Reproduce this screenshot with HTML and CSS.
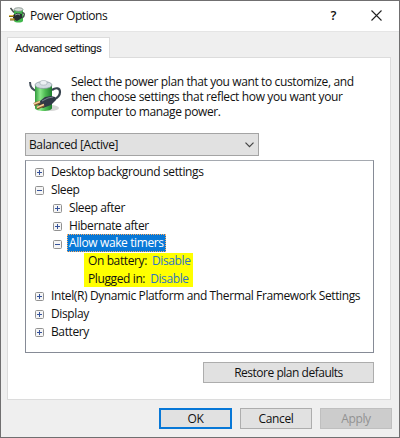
FILE: index.html
```
<!DOCTYPE html>
<html lang="en">
<head>
<meta charset="utf-8">
<title>Power Options</title>
<link rel="stylesheet" href="styles.css">
</head>
<body>
<svg width="0" height="0" class="defs">
  <defs>
    <linearGradient id="cell" x1="0" x2="1" y1="0" y2="0">
      <stop offset="0" stop-color="#2f9a3c"/><stop offset=".3" stop-color="#8be88a"/>
      <stop offset=".6" stop-color="#4dbb52"/><stop offset="1" stop-color="#1f7d2f"/>
    </linearGradient>
    <symbol id="battery" viewBox="0 0 34 34">
      <ellipse cx="23" cy="29" rx="8" ry="3" fill="#000" opacity=".16"/>
      <path d="M2 3C2 8 5 11 9 12" fill="none" stroke="#46515d" stroke-width="2"/>
      <path d="M7 6v23c0 4 17 4 17 0V6z" fill="url(#cell)"/>
      <ellipse cx="15.500" cy="6" rx="8.500" ry="3.500" fill="#d4dce2" stroke="#84949d" stroke-width=".7"/>
      <path d="M12 5V3c0-2 7-2 7 0v2c-1 1.500-6 1.500-7 0z" fill="#edf1f4" stroke="#9eaab2" stroke-width=".6"/>
      <path d="M24 11c4-3 8-2 8 2 0 3-2 6-7 8" fill="none" stroke="#38434f" stroke-width="2.200"/>
      <path d="M12 22l5-4 6-1 4 1 1 3-5 5-8 3-5-3z" fill="#303947"/>
      <path d="M14 22l6-3 5-1" fill="none" stroke="#77818e" stroke-width="1"/>
      <path d="M12 23l-6 2.500M16 26l-7 3" stroke="#805329" stroke-width="3"/>
      <path d="M12 22.500l-6 2.500M16 25.500l-7 3" stroke="#f4d29b" stroke-width="1.500"/>
    </symbol>
    <symbol id="battery-small" viewBox="0 0 16 17">
      <path d="M5 2v12c1 2 8 2 9 0V2z" fill="#42b84d"/>
      <ellipse cx="9.500" cy="2.500" rx="4.500" ry="1.800" fill="#d8dedb" stroke="#6f7f77" stroke-width=".7"/>
      <path d="M1.500 1L5 5.500M13 6c3-1 3 3 0 5" fill="none" stroke="#46504d" stroke-width="1.500"/>
      <path d="M4 8l4-2 5 1 0 4-5 3-4-2z" fill="#272e31"/>
      <path d="M0 9h5M1 12.500h5" stroke="#7d6318" stroke-width="1.800"/>
      <path d="M0 8.500h4M1 12h4" stroke="#e4c24b" stroke-width="1"/>
      <path d="M6 8l3-1 2 1" fill="none" stroke="#9aa3a5"/>
    </symbol>
    <symbol id="plus" viewBox="0 0 9 9">
      <rect x=".5" y=".5" width="8" height="8" rx="1" fill="#f5f5f5" stroke="#919191"/>
      <path d="M2 4.500h5M4.500 2v5" stroke="#35529b"/>
    </symbol>
    <symbol id="minus" viewBox="0 0 9 9">
      <rect x=".5" y=".5" width="8" height="8" rx="1" fill="#f5f5f5" stroke="#919191"/>
      <path d="M2 4.500h5" stroke="#35529b"/>
    </symbol>
  </defs>
</svg>
<main class="window">
  <header class="titlebar">
    <svg class="app-icon"><use href="#battery-small"/></svg>
    <h1>Power Options</h1>
    <span class="help">?</span>
    <svg class="close" viewBox="0 0 11 11"><path d="M.5.5l10 10M10.500.5l-10 10"/></svg>
  </header>
  <div class="tabs"><div class="tab">Advanced settings</div></div>
  <section class="panel">
    <div class="intro">
      <svg class="plan-icon"><use href="#battery"/></svg>
      <div class="copy">
        <div>Select the power plan that you want to customize, and</div>
        <div class="loose">then choose settings that reflect how you want your</div>
        <div>computer to manage power.</div>
      </div>
    </div>
    <div class="select"><span>Balanced [Active]</span><svg viewBox="0 0 9 6"><path d="M.5.7l4 4 4-4"/></svg></div>
    <ul class="tree">
      <li><svg><use href="#plus"/></svg><span>Desktop background settings</span></li>
      <li><svg><use href="#minus"/></svg><span>Sleep</span></li>
      <li class="sub"><svg><use href="#plus"/></svg><span>Sleep after</span></li>
      <li class="sub"><svg><use href="#plus"/></svg><span>Hibernate after</span></li>
      <li class="sub"><svg><use href="#minus"/></svg><span class="selected">Allow wake timers</span></li>
      <li class="values">
        <div><span>On battery:</span><a>Disable</a></div>
        <div><span>Plugged in:</span><a>Disable</a></div>
      </li>
      <li><svg><use href="#plus"/></svg><span>Intel(R) Dynamic Platform and Thermal Framework Settings</span></li>
      <li><svg><use href="#plus"/></svg><span>Display</span></li>
      <li><svg><use href="#plus"/></svg><span>Battery</span></li>
    </ul>
    <button class="restore">Restore plan defaults</button>
  </section>
  <footer>
    <button class="ok">OK</button>
    <button>Cancel</button>
    <button class="disabled">Apply</button>
  </footer>
</main>
</body>
</html>
```
FILE: styles.css
```
* { box-sizing: border-box; }
body { margin: 0; font: 12px/15px "Open Sans", "Noto Sans", sans-serif; letter-spacing: -.385px; color: #111; }
.defs { position: absolute; }
svg { display: block; flex: none; }
span, a, .copy div { white-space: nowrap; }
.window { width: 400px; height: 438px; border: 1px solid #706f70; background: #efefef; }
.titlebar { height: 31px; background: #fff; border-bottom: 1px solid #e5e5e5; display: flex; align-items: center; padding: 0 17px 2px 8px; }
.app-icon { width: 16px; height: 17px; }
h1 { margin: 1px auto 0 5px; font-size: 12px; font-weight: 400; letter-spacing: -.42px; }
.help { font-size: 13px; font-weight: 600; margin-right: 35px; }
.close { width: 11px; height: 11px; fill: none; stroke: #222; stroke-width: 1.1; }
.tabs { height: 25px; padding: 5px 0 0 6px; }
.tab { position: relative; width: 103px; height: 21px; background: #fff; border: 1px solid #dcdcdc; border-bottom: 0; padding: 3px 0 0 7px; font-family: Roboto, "Open Sans", sans-serif; font-size: 11.5px; letter-spacing: -.48px; white-space: nowrap; }
.panel { width: 384px; height: 343px; margin-left: 6px; background: #fff; border: 1px solid #dcdcdc; padding: 17px 16px 0 17px; }
.intro { display: flex; height: 58px; }
.plan-icon { width: 34px; height: 34px; margin: 4px 0 0 3px; }
.copy { margin: -1px 0 0 9px; }
.copy .loose { letter-spacing: -.36px; }
.select { width: 234px; height: 23px; background: #e1e1e1; border: 1px solid #a4a4a4; display: flex; align-items: center; justify-content: space-between; padding: 0 4px 0 3px; }
.select svg { width: 9px; height: 6px; fill: none; stroke: #444; stroke-width: 1.2; }
.tree { list-style: none; margin: 4px 0 0; width: 349px; height: 193px; border: 1px solid #868b96; border-top-color: #a5a9b0; padding: 1px 0 0 9px; }
.tree li { height: 18px; display: flex; align-items: center; }
.tree li > svg { width: 9px; height: 9px; margin: 3px 7px 0 0; }
.tree .sub { padding-left: 18px; }
.tree .selected { height: 18px; line-height: 15px; margin: 0 0 0 -2px; padding: 0 1px; border: 1px dotted #ffae62; background: #0878d7; color: #fff; }
.tree .values { display: block; width: 109px; height: 34px; margin: 1px 0 0 49px; padding-left: 4px; background: #ff0; }
.values div { height: 17px; padding-bottom: 3px; display: flex; align-items: center; gap: 5px; }
.values div + div { padding-bottom: 1px; }
.values + li { margin-top: -1px; }
a { color: #2f74c0; }
button { font: inherit; letter-spacing: inherit; color: #111; height: 21px; padding: 0; border: 1px solid #adadad; background: #e1e1e1; }
.restore { display: block; width: 171px; margin: 9px 0 0 178px; letter-spacing: -.48px; }
footer { display: flex; gap: 8px; padding: 8px 0 0 158px; }
footer button { width: 72px; }
footer .ok { width: 73px; border: 2px solid #0878d7; line-height: 15px; }
footer .disabled { color: #929292; background: #ccc; border-color: #bfbfbf; }
```
